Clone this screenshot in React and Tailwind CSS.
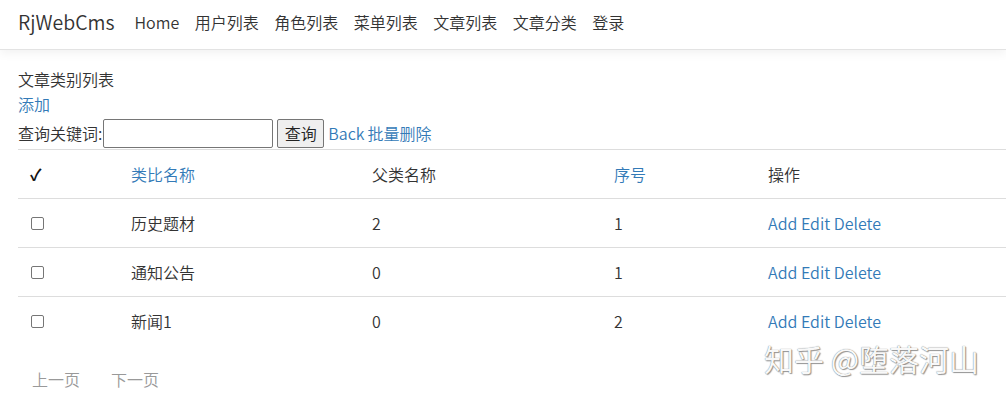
import React from "react";

const rows = [
  { name: "历史题材", parent: "2", order: "1" },
  { name: "通知公告", parent: "0", order: "1" },
  { name: "新闻1", parent: "0", order: "2" },
];

function Check() {
  return (
    <span className="block w-[13px] h-[13px] border border-[#767676] rounded-[2px] bg-white" />
  );
}

export default function App() {
  return (
    <div className="relative w-[1006px] h-[401px] bg-white text-[#333] text-[16px] font-[350] overflow-hidden font-['Segoe_UI','Noto_Sans_CJK_SC',sans-serif]">
      <nav className="h-[50px] flex items-start pt-[10px] pl-[18px] border-b border-[#e3e3e3] shadow-[0_3px_10px_rgba(0,0,0,0.06)] relative z-10 bg-white">
        <span className="text-[19.5px] leading-[24px] text-[#333] mr-[20px]">RjWebCms</span>
        <div className="flex gap-[15.5px] text-[16px] leading-[24px] text-[#333]">
          <a>Home</a>
          <a>用户列表</a>
          <a>角色列表</a>
          <a>菜单列表</a>
          <a>文章列表</a>
          <a>文章分类</a>
          <a>登录</a>
        </div>
      </nav>

      <main className="pl-[18px] pt-[17px]">
        <div className="leading-[24px]">文章类别列表</div>
        <div className="leading-[26px] text-[#337ab7]">添加</div>
        <div className="flex items-center h-[32px] leading-[24px]">
          <span>查询关键词:</span>
          <input
            type="text"
            className="w-[170px] h-[29px] border border-[#767676] rounded-[2px] bg-white ml-[1px]"
          />
          <button className="ml-[4px] w-[47px] h-[29px] border border-[#767676] rounded-[2px] bg-[#efefef] text-[16px] text-[#222] leading-[24px]">
            查询
          </button>
          <a className="ml-[4px] text-[#337ab7]">Back</a>
          <a className="ml-[3px] text-[#337ab7]">批量删除</a>
        </div>

        <table className="w-[988px] table-fixed border-collapse">
          <colgroup>
            <col className="w-[101px]" />
            <col className="w-[241px]" />
            <col className="w-[242px]" />
            <col className="w-[154px]" />
            <col />
          </colgroup>
          <thead>
            <tr className="h-[49px] border-t border-[#ddd]">
              <th className="text-left font-bold pl-[12px] align-middle text-[#111]">✓</th>
              <th className="text-left font-[350] pl-[12px] text-[#337ab7]">类比名称</th>
              <th className="text-left font-[350] pl-[12px]">父类名称</th>
              <th className="text-left font-[350] pl-[12px] text-[#337ab7]">序号</th>
              <th className="text-left font-[350] pl-[12px]">操作</th>
            </tr>
          </thead>
          <tbody>
            {rows.map((r) => (
              <tr key={r.name} className="h-[49px] border-t border-[#ddd]">
                <td className="pl-[13px]"><Check /></td>
                <td className="pl-[12px]">{r.name}</td>
                <td className="pl-[12px]">{r.parent}</td>
                <td className="pl-[12px]">{r.order}</td>
                <td className="pl-[12px] text-[#337ab7]">
                  <a>Add</a> <a>Edit</a> <a>Delete</a>
                </td>
              </tr>
            ))}
          </tbody>
        </table>

        <div className="flex gap-[31px] pl-[14px] mt-[21px] leading-[24px] text-[#999]">
          <a>上一页</a>
          <a>下一页</a>
        </div>
      </main>

      <div className="absolute left-[764px] top-[338px] text-[30px] leading-[40px] font-normal text-[#f8f8f8] [text-shadow:0_0_1px_#666,1px_1px_1px_#999]">
        知乎 @堕落河山
      </div>
    </div>
  );
}
